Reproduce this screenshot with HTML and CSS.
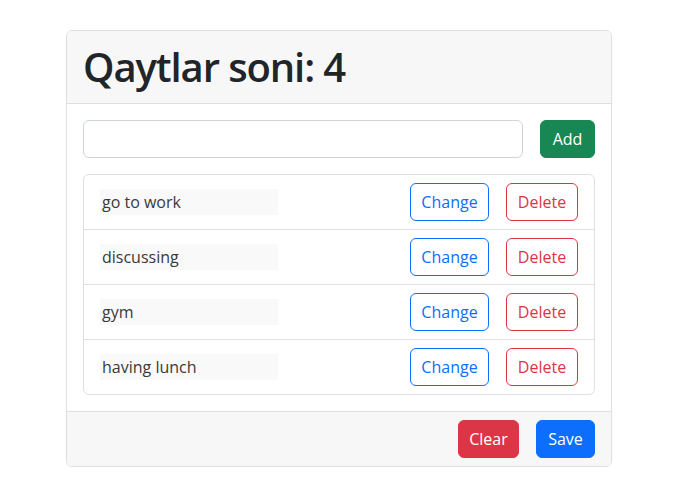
FILE: index.html
```html
<!DOCTYPE html>
<html>
<head>
<meta charset="utf-8">
<link rel="stylesheet" href="styles.css">
</head>
<body>
<div class="card">
  <div class="card-header"><h1 class="title">Qaytlar soni: 4</h1></div>
  <div class="card-body">
    <div class="add-row">
      <input class="input" type="text">
      <button class="btn btn-success">Add</button>
    </div>
    <ul class="list">
      <li class="item"><span class="text">go to work</span><div class="actions"><button class="btn btn-outline-primary">Change</button><button class="btn btn-outline-danger">Delete</button></div></li>
      <li class="item"><span class="text">discussing</span><div class="actions"><button class="btn btn-outline-primary">Change</button><button class="btn btn-outline-danger">Delete</button></div></li>
      <li class="item"><span class="text">gym</span><div class="actions"><button class="btn btn-outline-primary">Change</button><button class="btn btn-outline-danger">Delete</button></div></li>
      <li class="item"><span class="text">having lunch</span><div class="actions"><button class="btn btn-outline-primary">Change</button><button class="btn btn-outline-danger">Delete</button></div></li>
    </ul>
  </div>
  <div class="card-footer">
    <button class="btn btn-danger">Clear</button>
    <button class="btn btn-primary">Save</button>
  </div>
</div>
</body>
</html>
```
FILE: styles.css
```css
* { box-sizing: border-box; }
body {
  margin: 0;
  padding: 30px 0 0 66px;
  font-family: "Open Sans", "Noto Sans", sans-serif;
  font-size: 16px;
  color: #212529;
  background: #fff;
}
.card {
  width: 546px;
  border: 1px solid #dfdfdf;
  border-radius: 6px;
  overflow: hidden;
}
.card-header {
  background: #f7f7f7;
  border-bottom: 1px solid #dfdfdf;
  padding: 8px 16px;
  height: 73px;
}
.title {
  margin: 0;
  font-size: 40px;
  font-weight: 600;
  line-height: 56px;
  letter-spacing: -1.1px;
}
.card-body {
  padding: 16px;
}
.add-row {
  display: flex;
  gap: 17px;
  margin-bottom: 16px;
}
.input {
  flex: 1;
  height: 38px;
  border: 1px solid #ced4da;
  border-radius: 6px;
  font: inherit;
  padding: 6px 12px;
}
.btn {
  font: inherit;
  font-size: 16px;
  height: 38px;
  padding: 0;
  border-radius: 6px;
  border: 1px solid transparent;
  background: transparent;
  cursor: pointer;
  line-height: 1;
}
.btn-success { background: #198754; border-color: #198754; color: #fff; width: 55px; }
.btn-danger { background: #dc3545; border-color: #dc3545; color: #fff; width: 61px; }
.btn-primary { background: #0d6efd; border-color: #0d6efd; color: #fff; width: 59px; }
.btn-outline-primary { color: #0d6efd; border-color: #0d6efd; width: 79px; }
.btn-outline-danger { color: #dc3545; border-color: #dc3545; width: 72px; }
.list {
  list-style: none;
  margin: 0;
  padding: 0;
  border: 1px solid #dfdfdf;
  border-radius: 6px;
}
.item {
  display: flex;
  align-items: center;
  justify-content: space-between;
  padding: 8px 16px;
  height: 55px;
  border-top: 1px solid #dfdfdf;
}
.item:first-child { border-top: none; height: 54px; }
.text {
  width: 178px;
  height: 26px;
  background: #f9f9f9;
  padding: 0 2px;
  line-height: 26px;
  color: #3a3a3a;
}
.actions {
  display: flex;
  gap: 17px;
}
.card-footer {
  background: #f7f7f7;
  border-top: 1px solid #dfdfdf;
  padding: 8px 16px;
  display: flex;
  justify-content: flex-end;
  gap: 17px;
  height: 55px;
}
```
